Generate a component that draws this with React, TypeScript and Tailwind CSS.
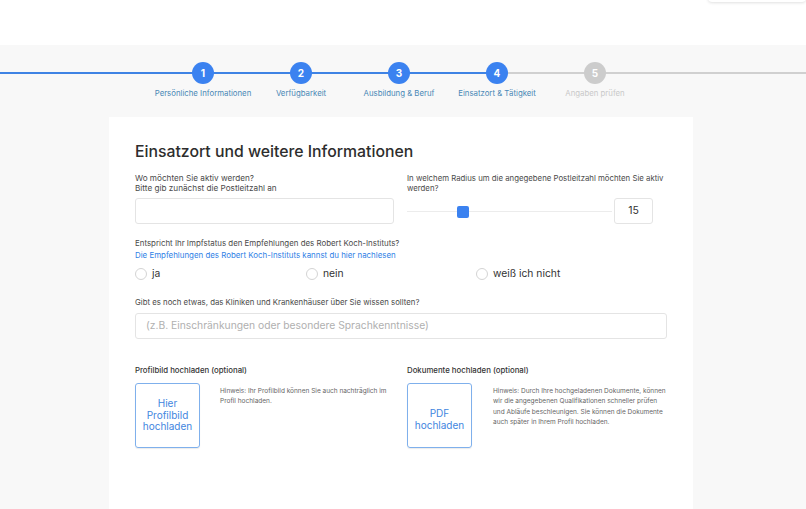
import React from 'react';

const steps = [
  { n: 1, label: 'Persönliche Informationen', done: true },
  { n: 2, label: 'Verfügbarkeit', done: true },
  { n: 3, label: 'Ausbildung & Beruf', done: true },
  { n: 4, label: 'Einsatzort & Tätigkeit', done: true },
  { n: 5, label: 'Angaben prüfen', done: false },
];

function Radio({ label, className }: { label: string; className?: string }) {
  return (
    <label className={`flex items-center gap-[5px] h-[12px] ${className ?? ''}`}>
      <span className="w-[12px] h-[12px] rounded-full border border-[#d4d4d4] bg-white" />
      <span className="text-[10.3px] text-[#333]">{label}</span>
    </label>
  );
}

export default function App() {
  return (
    <div className="w-[806px] h-[509px] overflow-hidden bg-[#f8f8f8] font-['Inter',sans-serif] relative">
      {/* header */}
      <div className="h-[45px] bg-white relative">
        <div className="absolute right-0 -top-[10px] w-[98px] h-[12px] bg-white rounded-b shadow-[0_1px_3px_rgba(0,0,0,0.12)]" />
      </div>

      {/* stepper */}
      <div className="relative h-[72px]">
        <div className="absolute left-0 top-[27px] w-[497px] h-[2px] bg-[#3f83e4]" />
        <div className="absolute left-[497px] right-0 top-[27px] h-[2px] bg-[#d0d0d0]" />
        <div className="relative flex pl-[154px] pt-[17px]">
          {steps.map((s) => (
            <div key={s.n} className="w-[98px] flex flex-col items-center">
              <div
                className={`w-[22px] h-[22px] rounded-full flex items-center justify-center text-[10px] font-bold text-white ${
                  s.done ? 'bg-[#3b82f0]' : 'bg-[#cccccc]'
                }`}
              >
                {s.n}
              </div>
              <span
                className={`mt-[4px] text-[7.8px] whitespace-nowrap ${
                  s.done ? 'text-[#4a88b6]' : 'text-[#c9c9c9]'
                }`}
              >
                {s.label}
              </span>
            </div>
          ))}
        </div>
      </div>

      {/* card */}
      <div className="ml-[109px] w-[584px] h-[400px] bg-white px-[26px] pt-[25px]">
        <h1 className="text-[15.8px] font-medium text-[#2d2d2d] leading-[20px]">
          Einsatzort und weitere Informationen
        </h1>

        <div className="grid grid-cols-[259px_259px] gap-x-[13px] mt-[11px]">
          <div>
            <p className="text-[8.2px] leading-[10px] text-[#4a4a4a]">
              Wo möchten Sie aktiv werden?
              <br />
              Bitte gib zunächst die Postleitzahl an
            </p>
            <div className="mt-[5px] h-[26px] border border-[#e4e4e4] rounded-[3px]" />
          </div>
          <div>
            <p className="text-[7.8px] leading-[10px] text-[#4a4a4a]">
              In welchem Radius um die angegebene Postleitzahl möchten Sie aktiv werden?
            </p>
            <div className="mt-[5px] flex items-center">
              <div className="relative w-[205px] h-[26px] flex items-center">
                <div className="w-full h-[1px] bg-[#ececec]" />
                <div className="absolute left-[50px] top-[8px] w-[12px] h-[12px] rounded-[2px] bg-[#3b82f0]" />
              </div>
              <div className="ml-[2px] w-[39px] h-[26px] border border-[#e4e4e4] rounded-[3px] flex items-center justify-center text-[10.5px] text-[#333]">
                15
              </div>
            </div>
          </div>
        </div>

        <p className="mt-[13px] text-[7.9px] leading-[12px] text-[#4a4a4a]">
          Entspricht Ihr Impfstatus den Empfehlungen des Robert Koch-Instituts?
        </p>
        <p className="text-[7.9px] leading-[12px] text-[#2f7fe6]">
          Die Empfehlungen des Robert Koch-Instituts kannst du hier nachlesen
        </p>
        <div className="flex mt-[7px]">
          <Radio label="ja" className="w-[171px]" />
          <Radio label="nein" className="w-[170px]" />
          <Radio label="weiß ich nicht" />
        </div>

        <p className="mt-[16px] text-[7.8px] leading-[12px] text-[#4a4a4a]">
          Gibt es noch etwas, das Kliniken und Krankenhäuser über Sie wissen sollten?
        </p>
        <div className="mt-[5px] h-[26px] border border-[#e4e4e4] rounded-[3px] flex items-center px-[10px] text-[10.3px] text-[#b0b0b0]">
          (z.B. Einschränkungen oder besondere Sprachkenntnisse)
        </div>

        <div className="grid grid-cols-[259px_259px] gap-x-[13px] mt-[25px]">
          <div>
            <p className="text-[7.8px] leading-[12px] text-[#333] font-medium">Profilbild hochladen (optional)</p>
            <div className="flex mt-[7px]">
              <div className="w-[65px] h-[65px] shrink-0 border border-[#7fb0ec] rounded-[3px] shadow-[0_1px_1px_rgba(0,0,0,0.08)] flex items-center justify-center text-center text-[10px] leading-[11.5px] text-[#3f86e0]">
                Hier
                <br />
                Profilbild
                <br />
                hochladen
              </div>
              <p className="ml-[20px] mt-[3px] text-[6.5px] leading-[10.3px] text-[#666] w-[175px]">
                Hinweis: Ihr Profilbild können Sie auch nachträglich im Profil hochladen.
              </p>
            </div>
          </div>
          <div>
            <p className="text-[7.8px] leading-[12px] text-[#333] font-medium">Dokumente hochladen (optional)</p>
            <div className="flex mt-[7px]">
              <div className="w-[65px] h-[65px] shrink-0 border border-[#7fb0ec] rounded-[3px] shadow-[0_1px_1px_rgba(0,0,0,0.08)] flex items-center justify-center text-center text-[10px] leading-[11.5px] text-[#3f86e0] pt-[8px]">
                PDF
                <br />
                hochladen
              </div>
              <p className="ml-[21px] mt-[3px] text-[6.5px] leading-[10.3px] text-[#666] w-[175px]">
                Hinweis: Durch Ihre hochgeladenen Dokumente, können wir die angegebenen Qualifikationen schneller prüfen und Abläufe beschleunigen. Sie können die Dokumente auch später in Ihrem Profil hochladen.
              </p>
            </div>
          </div>
        </div>
      </div>
    </div>
  );
}
